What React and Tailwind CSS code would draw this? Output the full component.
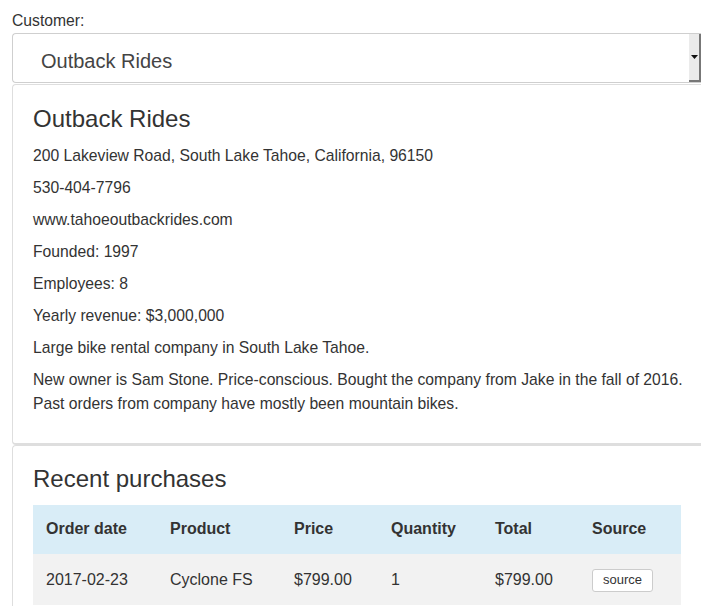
export default function App() {
  const font = { fontFamily: '"Liberation Sans", Arial, sans-serif' };
  return (
    <div className="min-h-[606px] bg-white pl-3 pt-[9px] text-[15.7px] leading-6 text-[#333]" style={font}>
      <div className="h-6 leading-6">Customer:</div>
      <div className="flex h-[50px] items-stretch rounded-l-[4px] border border-r-0 border-[#cfcfcf] bg-white">
        <div className="flex flex-1 items-center pl-7 pt-[5px] text-[20px] text-[#444]">Outback Rides</div>
        <div className="flex w-[12px] items-center justify-center border-r-2 border-b-2 border-[#777] bg-[#ebebeb]">
          <svg width="7" height="4" viewBox="0 0 7 4"><path d="M0 0h7L3.5 4z" fill="#111" /></svg>
        </div>
      </div>
      <div className="mt-px rounded-l-[4px] border border-r-0 border-b-2 border-[#dedede] pl-5 pr-1 pt-[21px] pb-[19px]">
        <h2 className="mb-3 text-[24px] leading-[26px]">Outback Rides</h2>
        <p className="mb-2">200 Lakeview Road, South Lake Tahoe, California, 96150</p>
        <p className="mb-2">530-404-7796</p>
        <p className="mb-2">www.tahoeoutbackrides.com</p>
        <p className="mb-2">Founded: 1997</p>
        <p className="mb-2">Employees: 8</p>
        <p className="mb-2">Yearly revenue: $3,000,000</p>
        <p className="mb-2">Large bike rental company in South Lake Tahoe.</p>
        <p className="mb-2">New owner is Sam Stone. Price-conscious. Bought the company from Jake in the fall of 2016.<br />Past orders from company have mostly been mountain bikes.</p>
      </div>
      <div className="rounded-l-[4px] border border-r-0 border-[#dedede] px-5 pt-5 pb-5">
        <h2 className="mb-[13px] text-[24px] leading-[26px]">Recent purchases</h2>
        <table className="w-[648px] border-collapse text-left text-[16px]">
          <thead>
            <tr className="h-[49px] bg-[#d9edf7]">
              <th className="w-[124px] pl-[13px] pb-px font-bold">Order date</th>
              <th className="w-[124px] pl-[13px] pb-px font-bold">Product</th>
              <th className="w-[97px] pl-[13px] pb-px font-bold">Price</th>
              <th className="w-[104px] pl-[13px] pb-px font-bold">Quantity</th>
              <th className="w-[97px] pl-[13px] pb-px font-bold">Total</th>
              <th className="pl-[13px] pb-px font-bold">Source</th>
            </tr>
          </thead>
          <tbody>
            <tr className="h-[51px] bg-[#f2f2f2]">
              <td className="pl-[13px]">2017-02-23</td>
              <td className="pl-[13px]">Cyclone FS</td>
              <td className="pl-[13px]">$799.00</td>
              <td className="pl-[13px]">1</td>
              <td className="pl-[13px]">$799.00</td>
              <td className="pl-[13px]">
                <span className="inline-flex h-[23px] w-[61px] items-center justify-center rounded-[3px] border border-[#ccc] bg-white text-[13px]">source</span>
              </td>
            </tr>
          </tbody>
        </table>
      </div>
    </div>
  );
}
